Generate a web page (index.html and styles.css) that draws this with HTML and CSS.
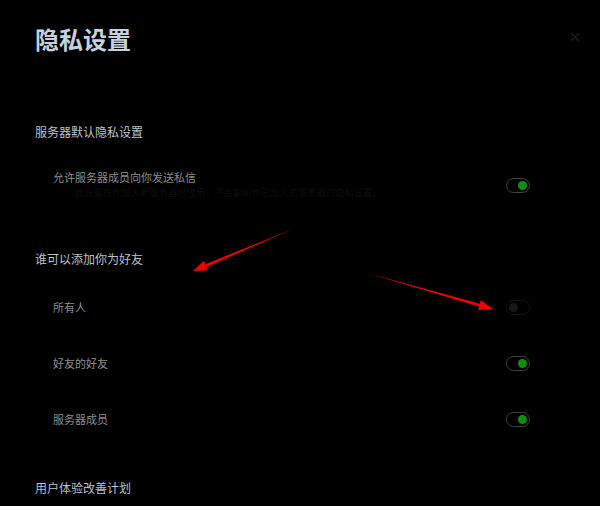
FILE: index.html
```html
<!DOCTYPE html>
<html lang="zh-CN">
<head>
<meta charset="utf-8">
<title>隐私设置</title>
<link rel="stylesheet" href="styles.css">
</head>
<body>
<div class="page">
  <div class="header">
    <h1 class="title">隐私设置</h1>
    <span class="close" aria-label="关闭">
      <svg width="10" height="10" viewBox="0 0 10 10"><path d="M1 1L9 9M9 1L1 9" stroke="#1e1e1e" stroke-width="1.4"/></svg>
    </span>
  </div>

  <h2 class="section first">服务器默认隐私设置</h2>
  <div class="row row-desc">
    <div class="text">
      <div class="label">允许服务器成员向你发送私信</div>
      <div class="desc">此设置在你加入新服务器时应用，不会影响你已加入的服务器的隐私设置。</div>
    </div>
    <span class="toggle on"><span class="knob"></span></span>
  </div>

  <h2 class="section second">谁可以添加你为好友</h2>
  <div class="row">
    <div class="label">所有人</div>
    <span class="toggle off"><span class="knob"></span></span>
  </div>
  <div class="row">
    <div class="label">好友的好友</div>
    <span class="toggle on"><span class="knob"></span></span>
  </div>
  <div class="row">
    <div class="label">服务器成员</div>
    <span class="toggle on"><span class="knob"></span></span>
  </div>

  <h2 class="section third">用户体验改善计划</h2>
</div>

<svg class="arrows" width="600" height="506" viewBox="0 0 600 506">
  <polygon fill="#f00000" points="293,229 206.5,267.0 207.9,270.2 193,271 204.0,260.9 205.3,264.2"/>
  <polygon fill="#f00000" points="367,273 479.1,306.5 478.1,309.9 493,309 480.9,300.3 479.9,303.7"/>
</svg>
</body>
</html>
```

FILE: styles.css
```css
html, body {
  margin: 0;
  padding: 0;
  background: #000;
}
body {
  width: 600px;
  height: 506px;
  overflow: hidden;
  position: relative;
  font-family: "Noto Sans CJK SC", "Noto Sans", sans-serif;
}
.page {
  padding: 0 18px 0 35px;
}
.header {
  display: flex;
  justify-content: space-between;
  align-items: center;
  margin-top: 24px;
  height: 30px;
}
.title {
  margin: 0;
  font-size: 24px;
  line-height: 30px;
  font-weight: 700;
  color: #c6d1dd;
}
.close {
  display: flex;
  width: 14px;
  height: 14px;
  align-items: center;
  justify-content: center;
  margin-top: -4px;
}
.section {
  margin: 0;
  font-size: 12px;
  line-height: 20px;
  font-weight: 400;
  color: #b9c3cd;
}
.section.first { margin-top: 68px; }
.section.second { margin-top: 50px; margin-bottom: 10px; }
.section.third { margin-top: 31px; }
.row {
  display: flex;
  align-items: center;
  justify-content: space-between;
  height: 56px;
  padding-left: 18px;
  margin-right: 52px;
}
.row-desc {
  height: auto;
  margin-top: 26px;
  align-items: flex-end;
}
.label {
  font-size: 11px;
  line-height: 18px;
  color: #8e8e8e;
}
.desc {
  font-size: 9.3px;
  line-height: 14px;
  color: #0d0d0d;
  padding-left: 22px;
  margin-top: -1px;
  white-space: nowrap;
}
.toggle {
  box-sizing: border-box;
  display: flex;
  align-items: center;
  width: 24px;
  height: 15px;
  border-radius: 8px;
  padding: 0 2px;
  flex-shrink: 0;
}
.row-desc .toggle { margin-bottom: 6px; }
.toggle .knob {
  width: 9px;
  height: 9px;
  border-radius: 50%;
}
.toggle.on {
  border: 1px solid #3a463a;
  justify-content: flex-end;
}
.toggle.on .knob { background: #138c16; }
.toggle.off {
  border: 1px solid #141414;
  justify-content: flex-start;
}
.toggle.off .knob { background: #181818; }
.arrows {
  position: absolute;
  left: 0;
  top: 0;
  pointer-events: none;
}
```
